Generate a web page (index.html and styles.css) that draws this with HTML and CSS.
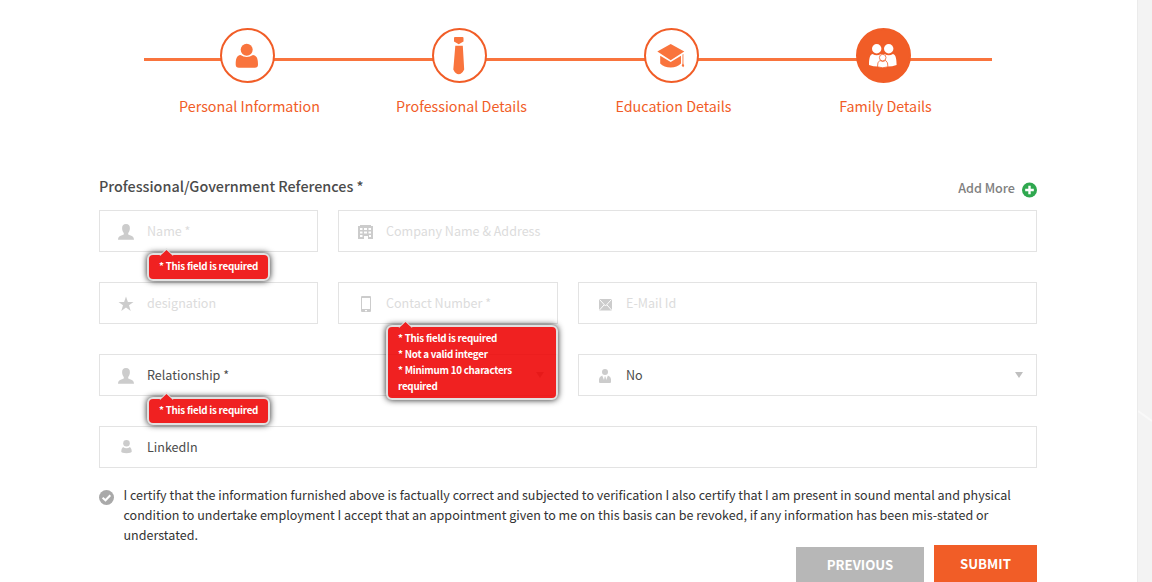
FILE: index.html
```html
<!DOCTYPE html>
<html lang="en">
<head>
<meta charset="utf-8">
<title>Family Details</title>
<link rel="stylesheet" href="styles.css">
</head>
<body>
<main class="sheet">
  <ol class="steps">
    <li class="step"><span class="disc"><svg width="55" height="55" viewBox="0 0 55 55"><circle cx="26.700" cy="21.800" r="6"/><path d="M20.500 27Q26.700 30.800 33 27C37 27.500 38 31 38 36.500Q38 39.700 34.800 39.700H19Q15.700 39.700 15.700 36.500C15.700 31 16.500 27.500 20.500 27Z"/></svg></span><span class="label">Personal Information</span></li>
    <li class="step"><span class="disc"><svg width="55" height="55" viewBox="0 0 55 55"><path d="M23 9h7.500Q31.500 9 31.500 10V13.500L26.700 16.300L22 13.500V10Q22 9 23 9ZM23.300 17.700H30.800L32.200 41.500Q29.800 46.300 26.700 46.300Q23.500 46.300 21.300 41.500Z"/></svg></span><span class="label">Professional Details</span></li>
    <li class="step"><span class="disc"><svg width="55" height="55" viewBox="0 0 55 55"><path d="M26.700 16L40.300 23.600L26.700 32.300L13.300 23.600ZM16.200 27.700L26.700 34L37 27.700V35.500Q33 39.500 26.700 39.500Q20 39.500 16.200 35.500ZM38.500 26.500L39.400 26V35.500L40.200 37.800L39.200 39.200L37.700 37.800L38.500 35.500Z"/></svg></span><span class="label">Education Details</span></li>
    <li class="step active"><span class="disc"><svg width="55" height="55" viewBox="0 0 55 55"><circle cx="20.700" cy="20.800" r="4.700"/><circle cx="32.700" cy="20.800" r="4.700"/><path d="M16.500 26Q20.700 28.600 25 26L26.700 27L28.500 26Q32.700 28.600 37 26C40 27 40.500 31 40.600 37Q33.600 39.500 26.700 38Q20 39.500 13 37C13.100 31 13.500 27 16.500 26Z"/><g class="child"><path d="M23.800 32.500Q26.700 34.500 29.700 32.500Q32.200 34 31.900 38.800Q26.700 40.800 21.500 38.800Q21.200 34 23.800 32.500Z"/><circle cx="26.700" cy="29.600" r="3.300"/></g></svg></span><span class="label">Family Details</span></li>
  </ol>

  <form class="references">
    <header class="heading">
      <h2 class="title">Professional/Government References *</h2>
      <a class="add-more"><span>Add More</span><svg width="16" height="16" viewBox="0 0 16 16"><circle cx="8.500" cy="8" r="7.500" fill="#2fa84f"/><path d="M8.500 3.700V12.300M4.200 8H12.800" stroke="#fff" stroke-width="2.400"/></svg></a>
    </header>

    <div class="fields">
      <div class="field">
        <svg class="icon" width="20" height="20" viewBox="0 0 20 20"><path d="M10 2C12.800 2 14 3.600 13.900 6.500C13.800 9 12.900 10 12.200 11V12.500C14 13.500 18 13.600 18 17.800H2C2 13.600 6 13.500 7.800 12.500V11C7.100 10 6.200 9 6.100 6.500C6 3.600 7.200 2 10 2Z"/></svg>
        <span class="placeholder">Name *</span>
        <div class="tip"><svg class="arrow" width="17" height="9" viewBox="0 0 17 9"><path class="edge" d="M1.500 9L8.500 1L15.500 9Z"/><path class="point" d="M2 9L8.500 3L15 9Z"/></svg><div class="message">* This field is required</div></div>
      </div>
      <div class="field span-rest">
        <svg class="icon" width="20" height="20" viewBox="-1 0 20 20"><path fill-rule="evenodd" d="M4 3H15V4H17V17H12V14H8V17H2V4H4ZM4 6V8H6.500V6ZM8 6V8H11V6ZM12.500 6V8H15V6ZM4 9.500V11.500H6.500V9.500ZM8 9.500V11.500H11V9.500ZM12.500 9.500V11.500H15V9.500ZM4 13V15H6.500V13ZM13 13V15H15V13Z"/></svg>
        <span class="placeholder">Company Name &amp; Address</span>
      </div>

      <div class="field">
        <svg class="icon" width="20" height="20" viewBox="0 0 20 20"><path d="M10 2.500L11.900 8H17.500L13 11.300L14.700 17L10 13.600L5.300 17L7 11.300L2.500 8H8.100Z"/></svg>
        <span class="placeholder">designation</span>
      </div>
      <div class="field">
        <svg class="icon" width="20" height="20" viewBox="-1 0 20 20"><path fill-rule="evenodd" d="M6 2H14Q15 2 15 3V17Q15 18 14 18H6Q5 18 5 17V3Q5 2 6 2ZM6 4V15H14V4ZM9 16V17.200H11V16Z"/></svg>
        <span class="placeholder">Contact Number *</span>
        <div class="tip wide"><svg class="arrow" width="17" height="9" viewBox="0 0 17 9"><path class="edge" d="M1.500 9L8.500 1L15.500 9Z"/><path class="point" d="M2 9L8.500 3L15 9Z"/></svg><div class="message">* This field is required<br>* Not a valid integer<br>* Minimum 10 characters<br>required</div></div>
      </div>
      <div class="field">
        <svg class="icon" width="20" height="20" viewBox="-1 0 20 20"><rect x="3" y="5" width="13" height="11.500" rx="1"/><path class="crease" d="M3.500 5.500L9.500 12L15.500 5.500M3.500 16L8 11M15.500 16L11 11"/></svg>
        <span class="placeholder">E-Mail Id</span>
      </div>

      <div class="field span-two">
        <svg class="icon" width="20" height="20" viewBox="0 0 20 20"><path d="M10 2C12.800 2 14 3.600 13.900 6.500C13.800 9 12.900 10 12.200 11V12.500C14 13.500 18 13.600 18 17.800H2C2 13.600 6 13.500 7.800 12.500V11C7.100 10 6.200 9 6.100 6.500C6 3.600 7.200 2 10 2Z"/></svg>
        <span class="value">Relationship *</span>
        <svg class="caret" width="8" height="6" viewBox="0 0 8 6"><path d="M0 0H8L4 6Z"/></svg>
        <div class="tip"><svg class="arrow" width="17" height="9" viewBox="0 0 17 9"><path class="edge" d="M1.500 9L8.500 1L15.500 9Z"/><path class="point" d="M2 9L8.500 3L15 9Z"/></svg><div class="message">* This field is required</div></div>
      </div>
      <div class="field">
        <svg class="icon" width="20" height="20" viewBox="-1 0 20 20"><circle cx="9" cy="6" r="3"/><path d="M6.200 9.500L8 14L8.700 10.500H9.500L10.200 14L11.900 9.500Q14.900 10.500 15 13V16Q15 17 14 17H4Q3 17 3 16V13Q3.300 10.500 6.200 9.500Z"/></svg>
        <span class="value">No</span>
        <svg class="caret" width="8" height="6" viewBox="0 0 8 6"><path d="M0 0H8L4 6Z"/></svg>
      </div>

      <div class="field span-all">
        <svg class="icon" width="20" height="20" viewBox="0 1 20 20"><circle cx="10.500" cy="6.300" r="3.300"/><path d="M7 10Q10.500 12.500 14 10Q16 12 15.800 14.500Q15.300 16.200 10.500 16.200Q5.500 16.200 5.200 14.500Q5 12 7 10Z"/></svg>
        <span class="value">LinkedIn</span>
      </div>
    </div>

    <div class="certify">
      <svg class="tick" width="15" height="15" viewBox="0 0 15 15"><circle cx="7.500" cy="7.500" r="7.500" fill="#a9a9a9"/><path d="M3.600 7.800L6.500 10.300L11.300 5.200" fill="none" stroke="#fff" stroke-width="2"/></svg>
      <p class="statement">I certify that the information furnished above is factually correct and subjected to verification I also certify that I am present in sound mental and physical<br>condition to undertake employment I accept that an appointment given to me on this basis can be revoked, if any information has been mis-stated or<br>understated.</p>
    </div>

    <div class="actions">
      <button type="button" class="button previous">PREVIOUS</button>
      <button type="button" class="button submit">SUBMIT</button>
    </div>
  </form>
</main>
<aside class="backdrop"><svg width="14" height="582" viewBox="0 0 14 582"><path d="M0 411L14 421" stroke="#f9f9f9" stroke-width="2"/></svg></aside>
</body>
</html>
```
FILE: styles.css
```css
* { box-sizing: border-box; }
body {
  margin: 0;
  height: 582px;
  overflow: hidden;
  display: flex;
  background: #f3f3f3;
  font-family: "Noto Sans CJK SC", "Open Sans", sans-serif;
  font-size: 12.550px;
  color: #4b4b4b;
}
.sheet { width: 1137px; height: 582px; overflow: hidden; background: #fff; }
.backdrop { width: 15px; border-left: 1px solid #ebebeb; }
.backdrop svg { display: block; }

.steps {
  list-style: none;
  margin: 28px 0 0 144px;
  padding: 0;
  width: 848px;
  height: 91px;
  display: flex;
  background: linear-gradient(#f9743d, #f9743d) 0 30px / 100% 3px no-repeat;
}
.step { width: 212px; display: flex; flex-direction: column; align-items: center; }
.disc {
  width: 55px;
  height: 55px;
  margin-right: 5px;
  border: 2px solid #f15d27;
  border-radius: 50%;
  background: #fff;
}
.disc svg { display: block; margin: -2px; fill: #f9743d; }
.active .disc { background: #f15d27; }
.active .disc svg { fill: #fff; }
.child { stroke: #f15d27; stroke-width: .8; }
.label { margin: 12px 1px 0 0; line-height: 22px; font-size: 14.300px; color: #f15d27; white-space: nowrap; }

.references { width: 938px; margin: 56px 0 0 99px; }
.heading { height: 35px; display: flex; justify-content: space-between; }
.title { margin: 0; font-size: 14.350px; font-weight: 500; line-height: 22px; white-space: nowrap; }
.add-more {
  height: 24px;
  display: flex;
  align-items: center;
  gap: 6px;
  font-weight: 500;
  font-size: 12.600px;
  color: #808080;
}
.add-more svg { margin-top: 5px; }

.fields {
  display: grid;
  grid-template-columns: 219px 220px 459px;
  grid-auto-rows: 42px;
  gap: 30px 20px;
}
.field {
  position: relative;
  display: flex;
  align-items: center;
  padding: 0 13px 0 16px;
  border: 1px solid #e3e3e3;
  background: #fff;
  white-space: nowrap;
}
.span-rest { grid-column: 2 / 4; }
.span-two { grid-column: 1 / 3; }
.span-all { grid-column: 1 / 4; }
.icon { fill: #ccc; margin: 2px 11px 0 0; }
.crease { fill: none; stroke: #fff; stroke-width: 1; }
.placeholder { padding-bottom: 2px; color: #dcdcdc; }
.value { padding-bottom: 2px; }
.caret { margin-left: auto; fill: #bfbfbf; }

.tip { position: absolute; z-index: 2; left: 47px; top: 42px; width: 123px; opacity: .87; }
.wide { width: 172px; }
.arrow { position: absolute; left: 11px; top: -6px; }
.edge { fill: #ddd; }
.point { fill: #ee0101; }
.message {
  padding: 3px 10px 5px;
  border: 2px solid #ddd;
  border-radius: 6px;
  background: #ee0101;
  box-shadow: 0 0 6px #000;
  color: #fff;
  font-size: 9.800px;
  font-weight: 700;
  letter-spacing: -.25px;
  line-height: 16px;
}
.wide .message { padding-bottom: 4px; }

.certify { display: flex; margin-top: 17px; }
.tick { margin: 5px 9.500px 0 0; flex: none; }
.statement { margin: 0; line-height: 20px; font-size: 12.540px; color: #333; white-space: nowrap; }
.actions { display: flex; justify-content: flex-end; gap: 10px; }
.button {
  border: 0;
  height: 38px;
  padding: 0;
  font: 700 13.200px/36px "Noto Sans CJK SC", "Open Sans", sans-serif;
  color: #fff;
}
.previous { height: 36px; margin-top: 2px; width: 128px; background: #b7b7b7; }
.submit { width: 103px; background: #f15d27; }
```
